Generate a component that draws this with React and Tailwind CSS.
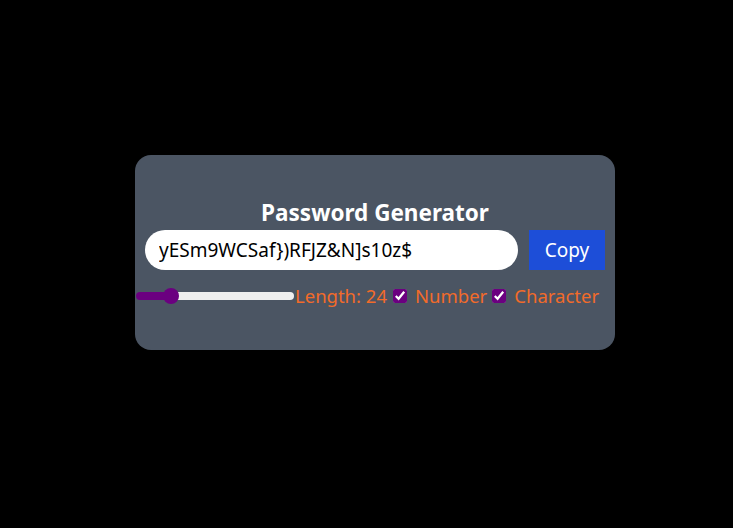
import { useState } from 'react';

export default function App() {
  const [length, setLength] = useState(24);
  const [number, setNumber] = useState(true);
  const [character, setCharacter] = useState(true);
  const password = 'yESm9WCSaf})RFJZ&N]s10z$';

  // fill ends at the thumb centre (158px track, 16px thumb)
  const frac = (length - 6) / (100 - 6);
  const pct = ((8 + frac * 142) / 158) * 100;

  return (
    <div className="min-h-screen bg-black pt-[155px] pl-[135px] font-['Noto_Sans',sans-serif]">
      <div className="w-[480px] h-[195px] bg-[#4b5563] rounded-2xl px-2.5 pt-[42px]">
        <h1 className="text-white text-center text-[22.5px] leading-8 font-bold">Password Generator</h1>

        {/* password + copy */}
        <div className="flex gap-[11px] mt-[1px]">
          <input
            type="text"
            value={password}
            readOnly
            className="flex-1 h-10 rounded-full bg-white px-[14px] text-[19px] text-black outline-none"
          />
          <button className="w-[76px] h-10 bg-[#1d4ed8] text-white text-[19px]">Copy</button>
        </div>

        {/* options */}
        <div className="flex items-center -ml-2.5 mt-[12px] text-[18.5px] text-[#f26b2a]">
          <input
            type="range"
            min={6}
            max={100}
            value={length}
            onChange={e => setLength(Number(e.target.value))}
            style={{ background: `linear-gradient(to right, #6b0080 ${pct}%, #efefef ${pct}%)` }}
            className="appearance-none w-[158px] h-2 ml-[1px] rounded-full cursor-pointer outline-none [&::-webkit-slider-thumb]:appearance-none [&::-webkit-slider-thumb]:w-4 [&::-webkit-slider-thumb]:h-4 [&::-webkit-slider-thumb]:rounded-full [&::-webkit-slider-thumb]:bg-[#6b0080]"
          />
          <label className="ml-[1px]">Length: {length}</label>
          <input
            type="checkbox"
            checked={number}
            onChange={() => setNumber(!number)}
            className="ml-[6px] mr-[8px] w-[14px] h-[14px] accent-[#6b0080]"
          />
          <label>Number</label>
          <input
            type="checkbox"
            checked={character}
            onChange={() => setCharacter(!character)}
            className="ml-[5px] mr-[8px] w-[14px] h-[14px] accent-[#6b0080]"
          />
          <label>Character</label>
        </div>
      </div>
    </div>
  );
}
